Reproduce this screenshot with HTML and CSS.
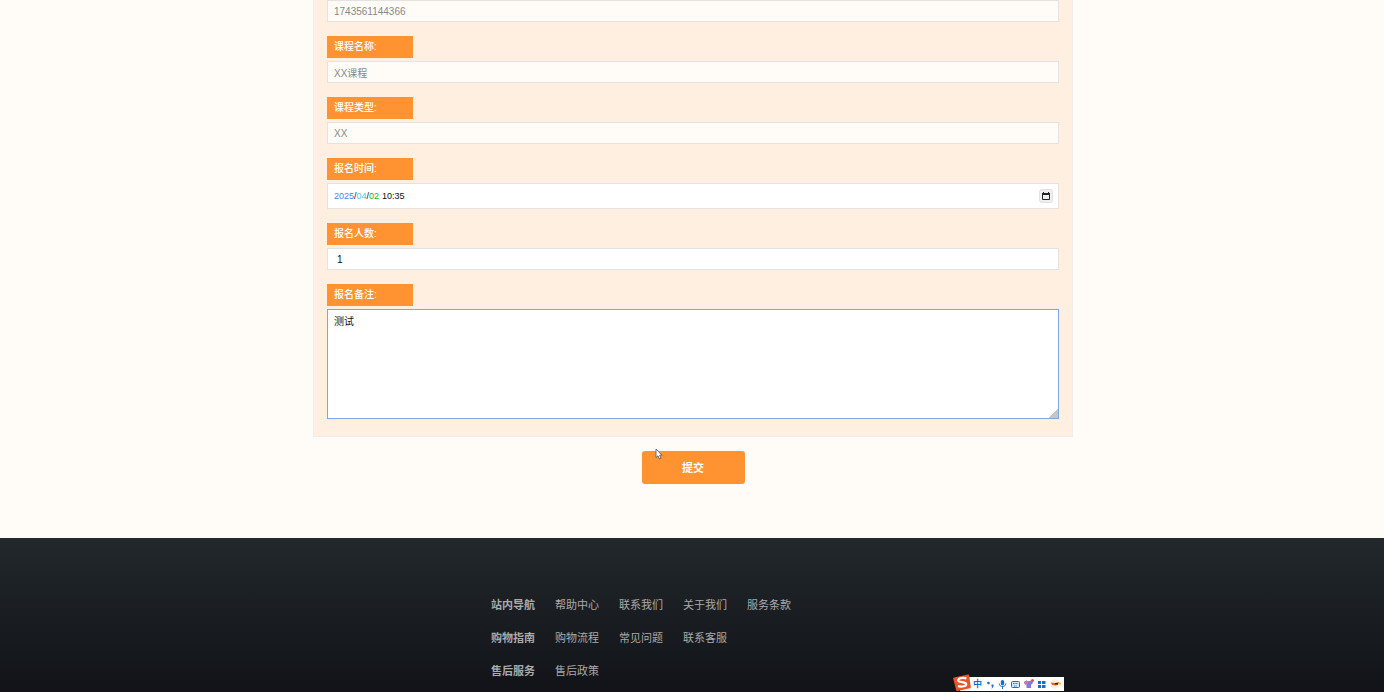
FILE: index.html
```html
<!DOCTYPE html>
<html lang="zh-CN">
<head>
<meta charset="utf-8">
<title>课程报名</title>
<link rel="stylesheet" href="styles.css">
</head>
<body>
<main class="main">
  <form class="signup">
    <div class="panel">
      <div class="row"><input class="field" type="text" aria-label="报名编号" value="1743561144366" readonly></div>
      <div class="row"><label class="tag" for="course">课程名称:</label><input class="field" id="course" type="text" value="XX课程" readonly></div>
      <div class="row"><label class="tag" for="kind">课程类型:</label><input class="field" id="kind" type="text" value="XX" readonly></div>
      <div class="row"><label class="tag" for="year">报名时间:</label>
        <div class="date">
          <input class="part year" id="year" type="text" value="2025"><span>/</span><input class="part month" type="text" aria-label="月" value="04"><span>/</span><input class="part day" type="text" aria-label="日" value="02"><input class="part time" type="text" aria-label="时间" value="10:35">
          <button class="picker" type="button" aria-label="选择日期"><svg width="8" height="8" viewBox="0 0 8 8"><path d="M.5 1.5h7v6h-7z" fill="none" stroke="#222"/><path d="M0 1h8v2H0zM1 0h1v1H1zM6 0h1v1H6z" fill="#222"/></svg></button>
        </div>
      </div>
      <div class="row"><label class="tag" for="count">报名人数:</label><input class="field count" id="count" type="text" inputmode="numeric" value="1"></div>
      <div class="row"><label class="tag" for="note">报名备注:</label><textarea class="field note" id="note" autofocus>测试</textarea></div>
    </div>
    <button class="submit" type="submit">提交</button>
  </form>
</main>
<footer class="footer">
  <nav class="links">
    <div class="group"><strong>站内导航</strong><a href="#">帮助中心</a><a href="#">联系我们</a><a href="#">关于我们</a><a href="#">服务条款</a></div>
    <div class="group"><strong>购物指南</strong><a href="#">购物流程</a><a href="#">常见问题</a><a href="#">联系客服</a></div>
    <div class="group"><strong>售后服务</strong><a href="#">售后政策</a></div>
  </nav>
</footer>
<div class="ime">
  <svg class="ime-logo" width="18" height="17" viewBox="0 0 18 17"><path d="M1 3.500 15 .5q1-.2 1.200.8l1.600 11.700q.1 1-.8 1.200L4.500 17q-1 .2-1.300-.8L.2 4.800Q0 3.800 1 3.500z" fill="#ea5424"/><path d="M13.400 4.300C9 3.400 4.800 4.300 5.100 6.700c.3 2.200 7.800.8 8.100 3.300.2 2.400-4.300 3-8.200 2.200" fill="none" stroke="#fff" stroke-width="2.200"/></svg>
  <span class="ime-mode">中</span>
  <svg width="9" height="9" viewBox="0 0 9 9"><circle cx="2.500" cy="3" r="1.300" fill="#1570c8"/><path d="M5.500 4.500h2v2L6 8.500h-.5l.7-2h-.7z" fill="#1570c8"/></svg>
  <svg width="9" height="9" viewBox="0 0 9 9"><rect x="2.800" y="0" width="3.400" height="5.500" rx="1.700" fill="#1570c8"/><path d="M1.200 3.500c0 4 6.600 4 6.600 0M4.500 6.500V9" fill="none" stroke="#1570c8"/></svg>
  <svg width="9" height="9" viewBox="0 0 9 9"><rect x=".5" y="1.500" width="8" height="6" rx="1" fill="#d7e9f8" stroke="#1570c8"/><path d="M2 3.500h5M3 6h3" stroke="#1570c8" stroke-dasharray="1 .6"/></svg>
  <svg width="10" height="10" viewBox="0 0 10 10"><path d="M0 3 2.500 1.500q2 1.500 4 0L9 3 8 5.500l-1-.3V9H2.500V5.200L1 5.500z" fill="#8a73dc"/><path d="M0 3 2.500 1.500l2 .8-.5 2.500-3 .7z" fill="#e06aae"/><circle cx="8.500" cy="1.500" r="1.500" fill="#f04b3c"/></svg>
  <svg width="9" height="9" viewBox="0 0 9 9"><path d="M1 1h3v3H1zM1 5h3v3H1zM5 5h3.500v3H5zM5 1h3.500v3H5z" fill="#1570c8"/></svg>
  <svg width="11" height="10" viewBox="0 0 11 10"><circle cx="5" cy="5" r="4.800" fill="#f8f0e4"/><path d="M1 3.500 5 4l4-1-1 3-2.500.5L2 6z" fill="#d8682f"/><path d="M5 4h3v1.500H5z" fill="#3b2820"/><path d="M10 3v3M8.500 4.500H11" stroke="#f5bd42"/></svg>
</div>
<svg class="cursor" width="8" height="12" viewBox="0 0 8 12"><path d="M1 1v8.500l2-1.700 1.500 3.200 1.500-.7L4.700 7.200H7z" fill="#fff" stroke="#555" stroke-width=".8"/></svg>
</body>
</html>
```
FILE: styles.css
```css
* { box-sizing: border-box; }

body {
  margin: 0;
  min-height: 100vh;
  display: flex;
  flex-direction: column;
  background: #fffcf7;
  color: #111;
  font: 10px/20px "Liberation Sans", "Noto Sans CJK SC", sans-serif;
}

input, textarea, button { font: inherit; color: inherit; }

.main { padding: 0 0 54px 2px; }

.signup {
  display: flex;
  flex-direction: column;
  align-items: center;
  gap: 14px;
}

.panel {
  width: 100%;
  max-width: 760px;
  padding: 0 13px 17px;
  display: flex;
  flex-direction: column;
  gap: 14px;
  background: #feefe0;
  border: 1px solid #f0eeec;
  border-top: 0;
}

.row {
  display: flex;
  flex-direction: column;
  align-items: flex-start;
  gap: 3px;
}

.tag {
  width: 86px;
  padding: 0 7px;
  line-height: 22px;
  background: #ff9331;
  color: #fff;
  font-weight: 500;
}

.field, .date {
  width: 100%;
  height: 22px;
  padding: 0 6px;
  background: #fff;
  border: 1px solid #e6e2df;
  outline: 0;
}

.field:read-only { background: #fffcf7; color: #888; }
.count { padding-left: 9px; }

.date {
  height: 26px;
  padding-right: 5px;
  display: flex;
  align-items: center;
  font-size: 9px;
}

.part { padding: 0; border: 0; background: none; outline: 0; }
.year { width: 20px; color: #4a85f5; }
.month { width: 10px; color: #45c8f0; }
.day { width: 10px; color: #22b422; }
.time { width: 30px; margin-left: 3px; }

.picker {
  width: 14px;
  height: 14px;
  margin-left: auto;
  padding: 0;
  display: grid;
  place-items: center;
  background: #efefef;
  border: 1px solid #e2e2e2;
  border-radius: 3px;
}

.field.note {
  height: 110px;
  padding: 2px 6px;
  border-color: #7fa6e0;
  resize: vertical;
}

.note::-webkit-resizer {
  background: linear-gradient(135deg, transparent 70%, #c4c6ca 70%);
}

.submit {
  width: 103px;
  height: 33px;
  background: #ff9331;
  color: #fff;
  border: 0;
  border-radius: 3px;
  font-size: 11px;
  font-weight: 700;
}

.footer {
  flex: 1;
  padding: 51px 0 0 2px;
  background: linear-gradient(#22282b, #111318);
  color: #a9aaab;
  font-size: 11px;
  line-height: 33px;
}

.links { max-width: 404px; margin: 0 auto; }
.group { display: flex; gap: 20px; }
.group a { color: inherit; text-decoration: none; }

.ime {
  position: fixed;
  left: 960px;
  bottom: 1px;
  width: 104px;
  height: 14px;
  padding: 0 3px 0 13px;
  display: flex;
  align-items: center;
  justify-content: space-between;
  background: #fff;
  color: #1570c8;
}

.ime-logo { position: absolute; left: -7px; bottom: 0; }
.ime-mode { font-size: 9px; font-weight: 700; line-height: 14px; }

.cursor { position: absolute; left: 655px; top: 448px; }
```
